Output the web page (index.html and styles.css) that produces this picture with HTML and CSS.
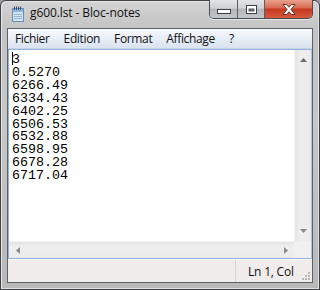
FILE: index.html
```html
<!DOCTYPE html>
<html lang="fr">
<head>
<meta charset="utf-8">
<title>g600.lst - Bloc-notes</title>
<link rel="stylesheet" href="styles.css">
</head>
<body>
<div class="window">
  <div class="titlebar">
    <svg class="app-icon" width="14" height="16" viewBox="0 0 14 16">
      <rect x="1.5" y="2.5" width="11" height="13" fill="#cfe3f4" stroke="#6a8fb5"/>
      <rect x="2" y="3" width="10" height="3" fill="#8fb8de"/>
      <g stroke="#3b4f66" stroke-width="1">
        <line x1="3.5" y1="0.5" x2="3.5" y2="4"/>
        <line x1="5.5" y1="0.5" x2="5.5" y2="4"/>
        <line x1="7.5" y1="0.5" x2="7.5" y2="4"/>
        <line x1="9.5" y1="0.5" x2="9.5" y2="4"/>
      </g>
      <g stroke="#9bb6d0" stroke-width="1">
        <line x1="3" y1="8.5" x2="11" y2="8.5"/>
        <line x1="3" y1="10.5" x2="11" y2="10.5"/>
        <line x1="3" y1="12.5" x2="11" y2="12.5"/>
      </g>
    </svg>
    <span class="title">g600.lst - Bloc-notes</span>
    <div class="caption">
      <div class="cbtn cbtn-min">
        <svg width="14" height="5" viewBox="0 0 14 5"><rect x="0.5" y="0.5" width="13" height="4" fill="#fff" stroke="#3c3f45"/></svg>
      </div>
      <div class="cbtn cbtn-max">
        <svg width="11" height="9" viewBox="0 0 11 9"><rect x="0.5" y="0.5" width="10" height="8" fill="#fff" stroke="#3c3f45"/><rect x="2.5" y="3.5" width="6" height="3" fill="#5d6068"/></svg>
      </div>
      <div class="cbtn cbtn-close">
        <svg width="14" height="11" viewBox="0 0 14 11"><path d="M1 0.5 H4.5 L7 3.2 L9.5 0.5 H13 L9 5.5 L13 10.5 H9.5 L7 7.8 L4.5 10.5 H1 L5 5.5 Z" fill="#fff" stroke="#5a2418" stroke-width="0.9" stroke-linejoin="round"/></svg>
      </div>
    </div>
  </div>
  <div class="client">
    <div class="menubar">
      <span class="menu-item">Fichier</span>
      <span class="menu-item">Edition</span>
      <span class="menu-item">Format</span>
      <span class="menu-item">Affichage</span>
      <span class="menu-item">?</span>
    </div>
    <div class="editor">
      <div class="edit-row">
        <div class="text"><span class="caret"></span>3
0.5270
6266.49
6334.43
6402.25
6506.53
6532.88
6598.95
6678.28
6717.04</div>
        <div class="vscroll">
          <svg class="arrow" width="7" height="4" viewBox="0 0 7 4"><path d="M3.5 0 L7 4 H0 Z" fill="#6b6b6b"/></svg>
          <svg class="arrow" width="7" height="4" viewBox="0 0 7 4"><path d="M0 0 H7 L3.5 4 Z" fill="#8a8a8a"/></svg>
        </div>
      </div>
      <div class="hscroll-row">
        <div class="hscroll">
          <svg class="arrow" width="4" height="7" viewBox="0 0 4 7"><path d="M4 0 V7 L0 3.5 Z" fill="#8a8a8a"/></svg>
          <svg class="arrow" width="4" height="7" viewBox="0 0 4 7"><path d="M0 0 L4 3.5 L0 7 Z" fill="#8a8a8a"/></svg>
        </div>
        <div class="corner"></div>
      </div>
    </div>
    <div class="statusbar">
      <div class="status-main"></div>
      <div class="status-pos">Ln 1, Col</div>
      <svg class="grip" width="10" height="10" viewBox="0 0 10 10">
        <g fill="#b9b6b4">
          <rect x="7" y="1" width="2" height="2"/>
          <rect x="4" y="4" width="2" height="2"/><rect x="7" y="4" width="2" height="2"/>
          <rect x="1" y="7" width="2" height="2"/><rect x="4" y="7" width="2" height="2"/><rect x="7" y="7" width="2" height="2"/>
        </g>
      </svg>
    </div>
  </div>
</div>
</body>
</html>
```
FILE: styles.css
```css
* { box-sizing: border-box; }
html, body { margin: 0; padding: 0; }
body {
  width: 320px;
  height: 290px;
  background: #9a9a9a;
  font-family: "Open Sans", "Noto Sans", sans-serif;
  overflow: hidden;
}
.window {
  width: 320px;
  height: 290px;
  border: 1px solid #3f4246;
  border-radius: 6px 6px 0 0;
  background: linear-gradient(to bottom, #d4d4d4 0px, #c3c3c3 28px, #c7c7c7 120px, #b8b8b8 290px);
  padding: 0 6px 6px 6px;
  display: flex;
  flex-direction: column;
  box-shadow: inset 1px 1px 0 #e6e6e6, inset -1px -1px 0 #e0e0e0;
}
.titlebar {
  height: 27px;
  display: flex;
  align-items: flex-start;
  position: relative;
}
.app-icon {
  margin: 5px 0 0 4px;
  flex: none;
}
.title {
  margin: 4px 0 0 5px;
  font-size: 12px;
  line-height: 16px;
  color: #111;
  letter-spacing: -0.1px;
}
.caption {
  margin-left: auto;
  margin-top: -1px;
  display: flex;
  height: 19px;
  border: 1px solid #4a4d52;
  border-top: none;
  border-radius: 0 0 5px 5px;
  overflow: hidden;
  box-shadow: 0 1px 0 rgba(255,255,255,0.5);
}
.cbtn {
  height: 18px;
  display: flex;
  align-items: center;
  justify-content: center;
}
.cbtn-min {
  width: 28px;
  background: linear-gradient(to bottom, #e2e4e7 0%, #cfd2d6 45%, #b3b7bc 50%, #c3c7cc 100%);
  border-right: 1px solid #5b5e63;
  padding-top: 5px;
}
.cbtn-max {
  width: 27px;
  background: linear-gradient(to bottom, #e2e4e7 0%, #cfd2d6 45%, #b3b7bc 50%, #c3c7cc 100%);
  border-right: 1px solid #5b5e63;
}
.cbtn-close {
  width: 47px;
  background: linear-gradient(to bottom, #e8a18f 0%, #d8674d 45%, #c5391f 50%, #d45a3d 100%);
}
.client {
  flex: 1;
  border: 1px solid #5e6166;
  background: #f0eeed;
  display: flex;
  flex-direction: column;
}
.menubar {
  height: 20px;
  display: flex;
  align-items: center;
  background: linear-gradient(to bottom, #f7f9fc 0%, #e8eef7 50%, #dae3f0 100%);
  border-bottom: 1px solid #c8d3e2;
}
.menu-item {
  font-size: 12px;
  line-height: 16px;
  color: #111;
  padding: 0 7px;
  letter-spacing: -0.35px;
}
.editor {
  height: 210px;
  border: 1px solid #8fb3de;
  border-right-color: #a9c6e6;
  display: flex;
  flex-direction: column;
  background: #fff;
}
.edit-row {
  flex: 1;
  display: flex;
  min-height: 0;
}
.text {
  flex: 1;
  white-space: pre;
  font-family: "Liberation Mono", "DejaVu Sans Mono", monospace;
  font-size: 13.33px;
  line-height: 12.9px;
  color: #000;
  padding: 2px 0 0 3px;
  overflow: hidden;
}
.caret {
  display: inline-block;
  width: 1px;
  height: 13px;
  background: #000;
  vertical-align: -2px;
  margin-right: -1px;
}
.vscroll {
  width: 17px;
  background: linear-gradient(to right, #e3e3e3 0%, #efefef 30%, #ebebeb 100%);
  border-left: 1px solid #f4f4f4;
  display: flex;
  flex-direction: column;
  justify-content: space-between;
  align-items: center;
  padding: 8px 0 8px 0;
}
.hscroll-row {
  height: 17px;
  display: flex;
}
.hscroll {
  flex: 1;
  background: linear-gradient(to bottom, #e3e3e3 0%, #efefef 30%, #ebebeb 100%);
  border-top: 1px solid #f4f4f4;
  display: flex;
  justify-content: space-between;
  align-items: center;
  padding: 0 6px 0 7px;
}
.corner {
  width: 17px;
  background: #f0f0f0;
}
.statusbar {
  flex: 1;
  display: flex;
  align-items: center;
  border-top: 1px solid #faf9f9;
  background: #efeceb;
  position: relative;
}
.status-main {
  width: 228px;
  height: 100%;
  border-right: 1px solid #d6d2cf;
}
.status-pos {
  font-size: 12px;
  line-height: 16px;
  color: #111;
  padding: 2px 0 0 12px;
  letter-spacing: -0.2px;
}
.grip {
  position: absolute;
  right: 1px;
  bottom: 1px;
}
```
